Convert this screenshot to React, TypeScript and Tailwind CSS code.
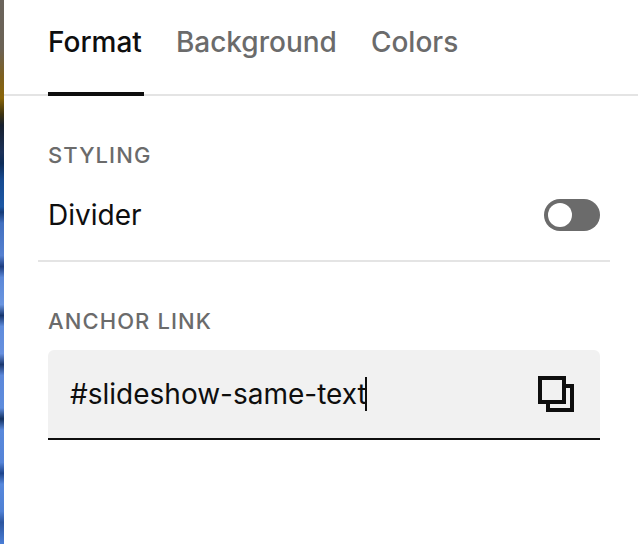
import { useState } from "react";

const tabs = ["Format", "Background", "Colors"];

function CopyIcon() {
  return (
    <svg width="36" height="36" viewBox="0 0 36 36" fill="none" stroke="currentColor" strokeWidth="4" aria-hidden="true">
      <path d="M2 2H26V26H2Z" />
      <path d="M28 10H34V34H10V28" />
    </svg>
  );
}

function Tabs() {
  const [active, setActive] = useState("Format");
  return (
    <div role="tablist" className="flex h-24 gap-8 border-b-2 border-[#e4e4e4] pl-11">
      {tabs.map((tab) => (
        <button
          key={tab}
          type="button"
          role="tab"
          aria-selected={active === tab}
          onClick={() => setActive(tab)}
          className={
            active === tab
              ? "-mb-0.5 border-b-4 border-[#0e0e0e] pr-0.5 pb-2 text-[28px] leading-8 font-medium text-[#0e0e0e]"
              : "-mb-0.5 border-b-4 border-transparent pr-0.5 pb-2 text-[28px] leading-8 font-medium text-[#6b6b6b]"
          }
        >
          {tab}
        </button>
      ))}
    </div>
  );
}

function AnchorField() {
  const [anchor, setAnchor] = useState("#slideshow-same-text");
  return (
    <div className="mt-[15px] flex h-[90px] items-center rounded-t-md border-b-2 border-[#0e0e0e] bg-[#f1f1f1] pr-[26px] pl-[22px] text-[#0e0e0e]">
      <div className="relative min-w-0 flex-1 text-[28px] leading-[34px]">
        <input
          id="anchor"
          type="text"
          value={anchor}
          onChange={(event) => setAnchor(event.target.value)}
          className="block w-full bg-transparent caret-transparent outline-none"
        />
        <div aria-hidden="true" className="pointer-events-none absolute inset-0 flex overflow-hidden">
          <span className="invisible whitespace-pre">{anchor}</span>
          <span className="-ml-0.5 w-0.5 bg-[#0e0e0e]" />
        </div>
      </div>
      <button type="button" aria-label="Copy anchor link">
        <CopyIcon />
      </button>
    </div>
  );
}

export default function App() {
  const [divider, setDivider] = useState(false);
  return (
    <div className="flex min-h-screen bg-white font-['Inter',sans-serif]">
      <div className="w-1 shrink-0 bg-[linear-gradient(to_bottom,#6b645c_0%,#6b6255_9%,#7d6020_14%,#8a6508_18%,#3d3310_21%,#17202e_23%,#1c3158_28%,#0d2c58_30%,#174a90_33%,#1c58a5_38%,#163b78_39%,#4270c0_41%,#5580d0_47%,#1d3d80_49%,#5c88d8_51%,#6a95e0_56%,#16366f_58%,#5f8cdc_60%,#6790df_65%,#1b3870_67%,#5c88da_69%,#5e8cdd_75%,#12305f_77%,#5988db_79%,#5584d8_85%,#1d448c_87%,#5688dc_89%,#4f80d4_94%,#2c559f_96%,#4a7ed6_100%)]" />
      <main className="min-w-0 flex-1">
        <Tabs />
        <section className="mr-7 ml-[34px] border-b-2 border-[#e4e4e4] px-2.5 pt-[45px] pb-[27px]">
          <h2 className="text-[22px] leading-7 font-medium tracking-wider text-[#6b6b6b]">STYLING</h2>
          <div className="mt-7 flex h-9 items-center justify-between">
            <label htmlFor="divider" className="text-[28px] leading-9 text-[#0e0e0e]">
              Divider
            </label>
            <input
              id="divider"
              type="checkbox"
              role="switch"
              checked={divider}
              onChange={(event) => setDivider(event.target.checked)}
              className="h-8 w-14 appearance-none rounded-full bg-[#6b6b6b] p-1 before:block before:size-6 before:rounded-full before:bg-white checked:bg-[#0e0e0e] checked:before:ml-auto"
            />
          </div>
        </section>
        <section className="mr-7 ml-[34px] px-2.5 pt-[45px]">
          <label htmlFor="anchor" className="block text-[22px] leading-7 font-medium tracking-wider text-[#6b6b6b]">
            ANCHOR LINK
          </label>
          <AnchorField />
        </section>
      </main>
    </div>
  );
}
